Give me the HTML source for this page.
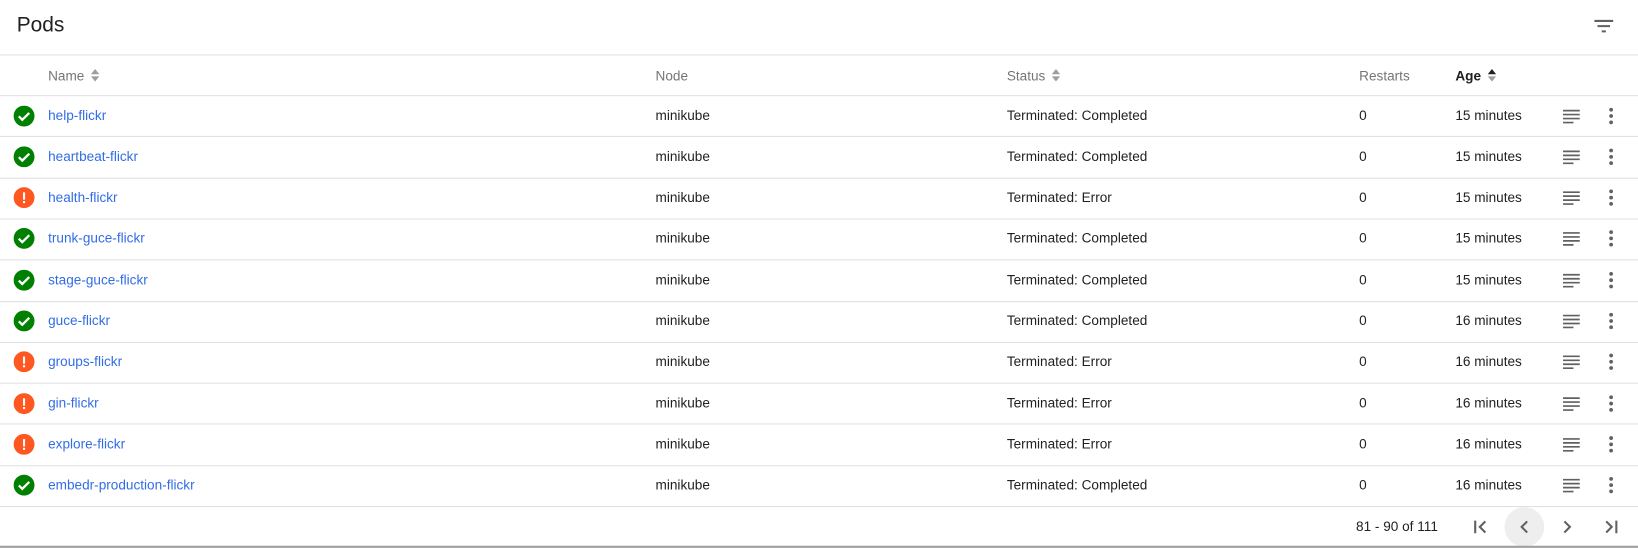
<!DOCTYPE html>
<html><head><meta charset="utf-8"><style>
*{margin:0;padding:0;box-sizing:border-box}
body{width:1638px;height:548px;background:#fff;font-family:"Liberation Sans",Arial,sans-serif;font-size:13px;color:#212121;overflow:hidden}
#w{position:relative;width:1567px;height:524px;transform:scale(1.0455);transform-origin:0 0}
.a{position:absolute;white-space:nowrap}
.line{position:absolute;left:0;width:1567px;height:1px;background:#e0e0e0}
.h{color:#757575;top:65px}
.link{color:#326de6}
</style></head><body><div id="w">
<div class="a" style="left:16px;top:13px;font-size:20px;color:#212121">Pods</div>
<svg class="a" style="left:1522px;top:13px" width="24" height="24" viewBox="0 0 24 24"><path d="M3 6h18v2H3zM6 11h12v2H6zM10 16h4v2h-4z" fill="#616161"/></svg>
<div class="line" style="top:52px"></div>
<div class="a h" style="left:46px">Name <svg width="10" height="14" viewBox="0 0 10 14" style="vertical-align:-2px;margin-left:2px"><path d="M1 6L5 1 9 6z" fill="#9e9e9e"/><path d="M1 8L5 13 9 8z" fill="#9e9e9e"/></svg></div>
<div class="a h" style="left:627px">Node</div>
<div class="a h" style="left:963px">Status <svg width="10" height="14" viewBox="0 0 10 14" style="vertical-align:-2px;margin-left:2px"><path d="M1 6L5 1 9 6z" fill="#9e9e9e"/><path d="M1 8L5 13 9 8z" fill="#9e9e9e"/></svg></div>
<div class="a h" style="left:1300px">Restarts</div>
<div class="a h" style="left:1392px;color:#212121;font-weight:bold">Age <svg width="10" height="14" viewBox="0 0 10 14" style="vertical-align:-2px;margin-left:2px"><path d="M1 6L5 1 9 6z" fill="#212121"/><path d="M1 8L5 13 9 8z" fill="#9e9e9e"/></svg></div>
<div class="line" style="top:91px"></div>
<div id="rows"></div>
<script>
var d=[["help-flickr",1,"15"],["heartbeat-flickr",1,"15"],["health-flickr",0,"15"],["trunk-guce-flickr",1,"15"],["stage-guce-flickr",1,"15"],["guce-flickr",1,"16"],["groups-flickr",0,"16"],["gin-flickr",0,"16"],["explore-flickr",0,"16"],["embedr-production-flickr",1,"16"]];
var h="";
d.forEach(function(r,i){var t=91+i*39.3;var c=t+19.5;
var ic=r[1]?'<svg class="a" style="left:13px;top:'+(c-10)+'px" width="20" height="20" viewBox="0 0 20 20"><circle cx="10" cy="10" r="10" fill="#008000"/><path d="M5 10.3l3.3 3.3L15 7" stroke="#fff" stroke-width="2.2" fill="none"/></svg>':'<svg class="a" style="left:13px;top:'+(c-10)+'px" width="20" height="20" viewBox="0 0 20 20"><circle cx="10" cy="10" r="10" fill="#ff5722"/><rect x="9" y="5" width="2" height="7" fill="#fff"/><rect x="9" y="13.3" width="2" height="2" fill="#fff"/></svg>';
h+=ic+'<div class="a link" style="left:46px;top:'+(c-8)+'px">'+r[0]+'</div>'+
'<div class="a" style="left:627px;top:'+(c-8)+'px">minikube</div>'+
'<div class="a" style="left:963px;top:'+(c-8)+'px">Terminated: '+(r[1]?'Completed':'Error')+'</div>'+
'<div class="a" style="left:1300px;top:'+(c-8)+'px">0</div>'+
'<div class="a" style="left:1392px;top:'+(c-8)+'px">'+r[2]+' minutes</div>'+
'<svg class="a" style="left:1494px;top:'+(c-9)+'px" width="18" height="18" viewBox="0 0 18 18"><path d="M1 3h16v1.6H1zM1 6.8h16v1.6H1zM1 10.6h16v1.6H1zM1 14.4h10v1.6H1z" fill="#616161"/></svg>'+
'<svg class="a" style="left:1536px;top:'+(c-9)+'px" width="10" height="18" viewBox="0 0 10 18"><circle cx="5" cy="3" r="1.8" fill="#616161"/><circle cx="5" cy="9" r="1.8" fill="#616161"/><circle cx="5" cy="15" r="1.8" fill="#616161"/></svg>'+
'<div class="line" style="top:'+Math.round(t+39.3)+'px"></div>';});
document.getElementById("rows").innerHTML=h;
</script>
<div class="a" style="left:1297px;top:496px">81 - 90 of 111</div>
<svg class="a" style="left:1404px;top:492px" width="24" height="24" viewBox="0 0 24 24"><path d="M6 6h2v12H6zM17.4 7.4L16 6l-6 6 6 6 1.4-1.4L12.8 12z" fill="#616161"/></svg>
<div class="a" style="left:1439px;top:485px;width:38px;height:38px;border-radius:50%;background:#eeeeee"></div>
<svg class="a" style="left:1446px;top:492px" width="24" height="24" viewBox="0 0 24 24"><path d="M15.4 7.4L14 6l-6 6 6 6 1.4-1.4L10.8 12z" fill="#616161"/></svg>
<svg class="a" style="left:1487px;top:492px" width="24" height="24" viewBox="0 0 24 24"><path d="M8.6 16.6L10 18l6-6-6-6-1.4 1.4 4.6 4.6z" fill="#616161"/></svg>
<svg class="a" style="left:1529px;top:492px" width="24" height="24" viewBox="0 0 24 24"><path d="M6.6 7.4L11.2 12l-4.6 4.6L8 18l6-6-6-6zM16 6h2v12h-2z" fill="#616161"/></svg>
<div class="a" style="left:0;top:522px;width:1567px;height:2px;background:#9e9e9e"></div>
</div></body></html>
